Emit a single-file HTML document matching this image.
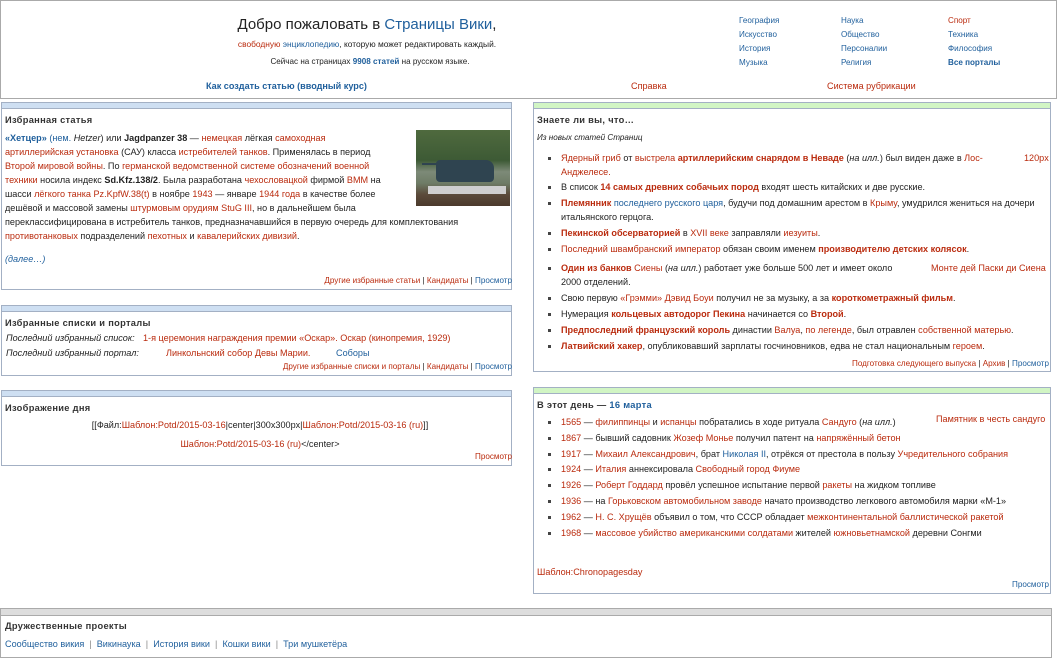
<!DOCTYPE html>
<html><head><meta charset="utf-8"><style>
*{margin:0;padding:0;box-sizing:border-box}
body{width:1058px;height:664px;background:#fff;font-family:"Liberation Sans",Arial,sans-serif;font-size:9.1px;color:#222;position:relative;overflow:hidden}
.a{position:absolute;white-space:nowrap;line-height:12px}
.r{color:#ba2b0e}.b{color:#1f5f9c}
.box{position:absolute;border:1px solid #a3b0c4}
.hb{position:absolute;left:0;right:0;top:0;height:6px;background:#cedff2;border-bottom:1px solid #a3b0c4}
.hg{position:absolute;left:0;right:0;top:0;height:6px;background:#d1f5c4;border-bottom:1px solid #a3b0c4}
.t{font-weight:bold;color:#333;font-size:9.3px;letter-spacing:.3px}
.f{font-size:8.1px}
.li{position:absolute;white-space:nowrap;line-height:14px;left:12px}
.li:before{content:"";position:absolute;left:-13px;top:6px;width:3px;height:3px;background:#444}
</style></head><body>

<div style="position:absolute;left:0;top:0;width:1057px;height:99px;border:1px solid #aaa"></div>
<div class="a" style="left:0;width:734px;text-align:center;top:16px;font-size:15px;line-height:18px">Добро пожаловать в <span class="b">Страницы Вики</span>,</div>
<div class="a" style="left:0;width:734px;text-align:center;top:38px;font-size:8.4px"><span class="r">свободную</span> <span class="b">энциклопедию</span>, которую может редактировать каждый.</div>
<div class="a" style="left:0;width:740px;text-align:center;top:56px;font-size:8.1px">Сейчас на страницах <b class="b">9908 статей</b> на русском языке.</div>
<div class="a b f" style="left:739px;top:14px;line-height:14px">География<br>Искусство<br>История<br>Музыка</div>
<div class="a b f" style="left:841px;top:14px;line-height:14px">Наука<br>Общество<br>Персоналии<br>Религия</div>
<div class="a f" style="left:948px;top:14px;line-height:14px"><span class="r">Спорт</span><br><span class="b">Техника</span><br><span class="b">Философия</span><br><b class="b">Все порталы</b></div>
<div class="a b" style="left:206px;top:80px;font-weight:bold;font-size:9.1px">Как создать статью (вводный курс)</div>
<div class="a r" style="left:631px;top:80px">Справка</div>
<div class="a r" style="left:827px;top:80px">Система рубрикации</div>

<!-- featured article -->
<div class="box" style="left:1px;top:102px;width:511px;height:188px"><div class="hb"></div></div>
<div class="a t" style="left:5px;top:114px">Избранная статья</div>
<div style="position:absolute;left:416px;top:130px;width:94px;height:76px;background:linear-gradient(#4f6a3e 0,#3d5a35 40%,#7d8a78 55%,#6e7c66 70%,#5b4a3a 85%,#4b3a2c 100%)">
<div style="position:absolute;left:20px;top:30px;width:58px;height:22px;background:#2f4450;border-radius:4px 8px 4px 4px"></div>
<div style="position:absolute;left:6px;top:33px;width:30px;height:2px;background:#2f4450"></div>
<div style="position:absolute;left:12px;top:56px;width:78px;height:8px;background:#cfcfcf"></div></div>
<div class="a" style="left:5px;top:132px"><b class="b">«Хетцер»</b> <span class="b">(нем.</span> <i>Hetzer</i>) или <b>Jagdpanzer 38</b> — <span class="r">немецкая</span> лёгкая <span class="r">самоходная</span></div>
<div class="a" style="left:5px;top:146px"><span class="r">артиллерийская установка</span> (САУ) класса <span class="r">истребителей танков</span>. Применялась в период</div>
<div class="a" style="left:5px;top:160px"><span class="r">Второй мировой войны</span>. По <span class="r">германской ведомственной системе обозначений военной</span></div>
<div class="a" style="left:5px;top:174px"><span class="r">техники</span> носила индекс <b>Sd.Kfz.138/2</b>. Была разработана <span class="r">чехословацкой</span> фирмой <span class="r">BMM</span> на</div>
<div class="a" style="left:5px;top:188px">шасси <span class="r">лёгкого танка Pz.KpfW.38(t)</span> в ноябре <span class="r">1943</span> — январе <span class="r">1944 года</span> в качестве более</div>
<div class="a" style="left:5px;top:202px">дешёвой и массовой замены <span class="r">штурмовым орудиям StuG III</span>, но в дальнейшем была</div>
<div class="a" style="left:5px;top:216px">переклассифицирована в истребитель танков, предназначавшийся в первую очередь для комплектования</div>
<div class="a" style="left:5px;top:230px"><span class="r">противотанковых</span> подразделений <span class="r">пехотных</span> и <span class="r">кавалерийских дивизий</span>.</div>
<div class="a b" style="left:5px;top:253px"><i>(далее…)</i></div>
<div class="a f" style="right:546px;top:275px"><span class="r">Другие избранные статьи</span> | <span class="r">Кандидаты</span> | <span class="b">Просмотр</span></div>

<!-- lists -->
<div class="box" style="left:1px;top:305px;width:511px;height:71px"><div class="hb"></div></div>
<div class="a t" style="left:5px;top:317px">Избранные списки и порталы</div>
<div class="a" style="left:6px;top:332px"><i>Последний избранный список:</i></div>
<div class="a r" style="left:143px;top:332px">1-я церемония награждения премии «Оскар». Оскар (кинопремия, 1929)</div>
<div class="a" style="left:6px;top:347px"><i>Последний избранный портал:</i></div>
<div class="a r" style="left:166px;top:347px">Линкольнский собор Девы Марии.</div>
<div class="a b" style="left:336px;top:347px">Соборы</div>
<div class="a f" style="right:546px;top:361px"><span class="r">Другие избранные списки и порталы</span> | <span class="r">Кандидаты</span> | <span class="b">Просмотр</span></div>

<!-- image of day -->
<div class="box" style="left:1px;top:390px;width:511px;height:76px"><div class="hb"></div></div>
<div class="a t" style="left:5px;top:402px">Изображение дня</div>
<div class="a" style="left:0;width:520px;text-align:center;top:419px">[[Файл:<span class="r">Шаблон:Potd/2015-03-16</span>|center|300x300px|<span class="r">Шаблон:Potd/2015-03-16 (ru)</span>]]</div>
<div class="a" style="left:0;width:520px;text-align:center;top:438px"><span class="r">Шаблон:Potd/2015-03-16 (ru)</span>&lt;/center&gt;</div>
<div class="a r f" style="right:546px;top:451px">Просмотр</div>

<!-- did you know -->
<div class="box" style="left:533px;top:102px;width:518px;height:270px"><div class="hg"></div></div>
<div class="a t" style="left:537px;top:114px">Знаете ли вы, что…</div>
<div class="a f" style="left:537px;top:132px"><i>Из новых статей Страниц</i></div>
<div style="position:absolute;left:549px;top:0">
<div class="li" style="top:151px"><span class="r">Ядерный гриб</span> от <span class="r">выстрела <b>артиллерийским снарядом в Неваде</b></span> (<i>на илл.</i>) был виден даже в <span class="r">Лос-</span></div>
<div class="a r" style="left:12px;top:166px">Анджелесе.</div>
<div class="li" style="top:180px">В список <b class="r">14 самых древних собачьих пород</b> входят шесть китайских и две русские.</div>
<div class="li" style="top:196px"><b class="r">Племянник</b> <span class="b">последнего русского царя</span>, будучи под домашним арестом в <span class="r">Крыму</span>, умудрился жениться на дочери</div>
<div class="a" style="left:12px;top:211px">итальянского герцога.</div>
<div class="li" style="top:226px"><b class="r">Пекинской обсерваторией</b> в <span class="r">XVII веке</span> заправляли <span class="r">иезуиты</span>.</div>
<div class="li" style="top:242px"><span class="r">Последний швамбранский император</span> обязан своим именем <b class="r">производителю детских колясок</b>.</div>
<div class="li" style="top:261px"><b class="r">Один из банков</b> <span class="r">Сиены</span> (<i>на илл.</i>) работает уже больше 500 лет и имеет около</div>
<div class="a" style="left:12px;top:276px">2000 отделений.</div>
<div class="li" style="top:291px">Свою первую <span class="r">«Грэмми»</span> <span class="r">Дэвид Боуи</span> получил не за музыку, а за <b class="r">короткометражный фильм</b>.</div>
<div class="li" style="top:307px">Нумерация <b class="r">кольцевых автодорог Пекина</b> начинается со <b class="r">Второй</b>.</div>
<div class="li" style="top:323px"><b class="r">Предпоследний французский король</b> династии <span class="r">Валуа</span>, <span class="r">по легенде</span>, был отравлен <span class="r">собственной матерью</span>.</div>
<div class="li" style="top:339px"><b class="r">Латвийский хакер</b>, опубликовавший зарплаты госчиновников, едва не стал национальным <span class="r">героем</span>.</div>
</div>
<div class="a r" style="left:1024px;top:152px">120px</div>
<div class="a r" style="left:931px;top:262px">Монте дей Паски ди Сиена</div>
<div class="a f" style="right:9px;top:358px"><span class="r">Подготовка следующего выпуска</span> | <span class="r">Архив</span> | <span class="b">Просмотр</span></div>

<!-- on this day -->
<div class="box" style="left:533px;top:387px;width:518px;height:207px"><div class="hg"></div></div>
<div class="a t" style="left:537px;top:399px">В этот день — <span class="b">16 марта</span></div>
<div class="a r" style="left:936px;top:413px">Памятник в честь сандуго</div>
<div style="position:absolute;left:549px;top:0">
<div class="li" style="top:415px"><span class="r">1565</span> — <span class="r">филиппинцы</span> и <span class="r">испанцы</span> побратались в ходе ритуала <span class="r">Сандуго</span> (<i>на илл.</i>)</div>
<div class="li" style="top:431px"><span class="r">1867</span> — бывший садовник <span class="r">Жозеф Монье</span> получил патент на <span class="r">напряжённый бетон</span></div>
<div class="li" style="top:447px"><span class="r">1917</span> — <span class="r">Михаил Александрович</span>, брат <span class="b">Николая II</span>, отрёкся от престола в пользу <span class="r">Учредительного собрания</span></div>
<div class="li" style="top:462px"><span class="r">1924</span> — <span class="r">Италия</span> аннексировала <span class="r">Свободный город Фиуме</span></div>
<div class="li" style="top:478px"><span class="r">1926</span> — <span class="r">Роберт Годдард</span> провёл успешное испытание первой <span class="r">ракеты</span> на жидком топливе</div>
<div class="li" style="top:494px"><span class="r">1936</span> — на <span class="r">Горьковском автомобильном заводе</span> начато производство легкового автомобиля марки «М-1»</div>
<div class="li" style="top:510px"><span class="r">1962</span> — <span class="r">Н. С. Хрущёв</span> объявил о том, что СССР обладает <span class="r">межконтинентальной баллистической ракетой</span></div>
<div class="li" style="top:526px"><span class="r">1968</span> — <span class="r">массовое убийство американскими солдатами</span> жителей <span class="r">южновьетнамской</span> деревни Сонгми</div>
</div>
<div class="a r" style="left:537px;top:566px">Шаблон:Chronopagesday</div>
<div class="a b f" style="right:9px;top:579px">Просмотр</div>

<!-- friends -->
<div style="position:absolute;left:0;top:608px;width:1052px;height:50px;border:1px solid #aaa"><div style="position:absolute;left:0;right:0;top:0;height:7px;background:#ddd;border-bottom:1px solid #aaa"></div></div>
<div class="a t" style="left:5px;top:620px">Дружественные проекты</div>
<div class="a b" style="left:5px;top:638px">Сообщество викия &nbsp;<span style="color:#888">|</span>&nbsp; Викинаука &nbsp;<span style="color:#888">|</span>&nbsp; История вики &nbsp;<span style="color:#888">|</span>&nbsp; Кошки вики &nbsp;<span style="color:#888">|</span>&nbsp; Три мушкетёра</div>
</body></html>
